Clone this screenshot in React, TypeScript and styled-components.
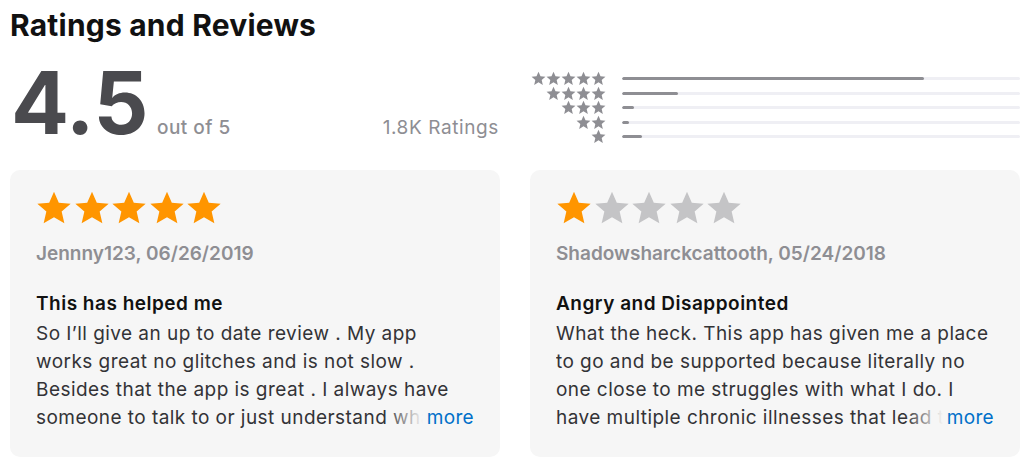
import React from "react";
import styled, { createGlobalStyle } from "styled-components";

const GlobalStyle = createGlobalStyle`
  html, body {
    margin: 0;
    padding: 0;
    background: #ffffff;
    font-family: Inter, "Liberation Sans", sans-serif;
    -webkit-font-smoothing: antialiased;
  }
`;

const Page = styled.div`
  width: 1022px;
  height: 461px;
  box-sizing: border-box;
  padding: 5px 2px 0 10px;
  overflow: hidden;
`;

const Title = styled.h1`
  margin: 0;
  font-size: 30px;
  line-height: 40px;
  font-weight: 700;
  color: #111;
  letter-spacing: 0.2px;
`;

const Columns = styled.div`
  display: grid;
  grid-template-columns: 490px 490px;
  column-gap: 30px;
`;

const Summary = styled.div`
  display: flex;
  align-items: baseline;
  height: 125px;
  padding-top: 8px;
  box-sizing: border-box;
`;

const BigScore = styled.span`
  font-size: 86px;
  line-height: 100px;
  font-weight: 700;
  color: #4a4a4e;
  letter-spacing: -0.5px;
  margin-left: 1px;
`;

const OutOf = styled.span`
  margin-left: 9px;
  font-size: 19px;
  color: #8e8e93;
  font-weight: 500;
  letter-spacing: 0.5px;
`;

const Count = styled.span`
  margin-left: auto;
  font-size: 19px;
  color: #8e8e93;
  letter-spacing: 0.6px;
  padding-right: 1px;
`;

const Histogram = styled.div`
  display: flex;
  flex-direction: column;
  gap: 1.5px;
  padding-top: 27px;
`;

const HistRow = styled.div`
  display: flex;
  align-items: center;
  height: 13px;
`;

const HistStars = styled.div`
  width: 76px;
  display: flex;
  justify-content: flex-end;
  flex: none;
`;

const Track = styled.div`
  margin-left: 16px;
  flex: 1;
  height: 3px;
  background: #efeff4;
  border-radius: 2px;
  overflow: hidden;
`;

const Fill = styled.div`
  height: 100%;
  background: #8e8e93;
  border-radius: 2px;
`;

const Card = styled.div`
  background: #f6f6f6;
  border-radius: 10px;
  height: 287px;
  box-sizing: border-box;
  padding: 20px 26px 0 26px;
`;

const CardStars = styled.div`
  display: flex;
  gap: 1.5px;
`;

const Author = styled.div`
  margin-top: 16px;
  font-size: 19px;
  font-weight: 600;
  color: #8e8e93;
  line-height: 24px;
`;

const ReviewTitle = styled.div`
  margin-top: 26px;
  font-size: 19px;
  font-weight: 600;
  color: #111;
  line-height: 24px;
  letter-spacing: 0.5px;
`;

const BodyWrap = styled.div`
  position: relative;
  margin-top: 4px;
`;

const Body = styled.p`
  margin: 0;
  font-size: 19px;
  line-height: 28px;
  letter-spacing: 0.45px;
  color: #333336;
  max-height: 112px;
  overflow: hidden;
`;

const More = styled.span`
  position: absolute;
  right: 0;
  bottom: 0;
  line-height: 28px;
  font-size: 19px;
  letter-spacing: 0.3px;
  color: #0070c9;
  padding-left: 42px;
  background: linear-gradient(to right, rgba(246, 246, 246, 0), #f6f6f6 38px);
`;

const STAR =
  "M12 1.2l3.2 7.3 7.9.7-6 5.2 1.8 7.8L12 18.1l-6.9 4.1 1.8-7.8-6-5.2 7.9-.7z";

function Star({ size, color }: { size: number; color: string }) {
  return (
    <svg width={size} height={size} viewBox="0 0 24 24">
      <path d={STAR} fill={color} />
    </svg>
  );
}

const bars = [
  { stars: 5, pct: 76 },
  { stars: 4, pct: 14 },
  { stars: 3, pct: 3 },
  { stars: 2, pct: 1.8 },
  { stars: 1, pct: 5 },
];

const reviews = [
  {
    rating: 5,
    author: "Jennny123, 06/26/2019",
    title: "This has helped me",
    body:
      "So I’ll give an up to date review . My app works great no glitches and is not slow . Besides that the app is great . I always have someone to talk to or just understand what I'm going through and people who care.",
  },
  {
    rating: 1,
    author: "Shadowsharckcattooth, 05/24/2018",
    title: "Angry and Disappointed",
    body:
      "What the heck. This app has given me a place to go and be supported because literally no one close to me struggles with what I do. I have multiple chronic illnesses that lead to a lot of problems in my daily life.",
  },
];

export default function App() {
  return (
    <Page>
      <GlobalStyle />
      <Title>Ratings and Reviews</Title>
      <Columns>
        <Summary>
          <BigScore>4.5</BigScore>
          <OutOf>out of 5</OutOf>
          <Count>1.8K Ratings</Count>
        </Summary>
        <Histogram>
          {bars.map((b) => (
            <HistRow key={b.stars}>
              <HistStars>
                {Array.from({ length: b.stars }).map((_, i) => (
                  <Star key={i} size={15} color="#8e8e93" />
                ))}
              </HistStars>
              <Track>
                <Fill style={{ width: `${b.pct}%` }} />
              </Track>
            </HistRow>
          ))}
        </Histogram>
        {reviews.map((r) => (
          <Card key={r.author}>
            <CardStars>
              {Array.from({ length: 5 }).map((_, i) => (
                <Star
                  key={i}
                  size={36}
                  color={i < r.rating ? "#ff9500" : "#c4c4c6"}
                />
              ))}
            </CardStars>
            <Author>{r.author}</Author>
            <ReviewTitle>{r.title}</ReviewTitle>
            <BodyWrap>
              <Body>{r.body}</Body>
              <More>more</More>
            </BodyWrap>
          </Card>
        ))}
      </Columns>
    </Page>
  );
}
